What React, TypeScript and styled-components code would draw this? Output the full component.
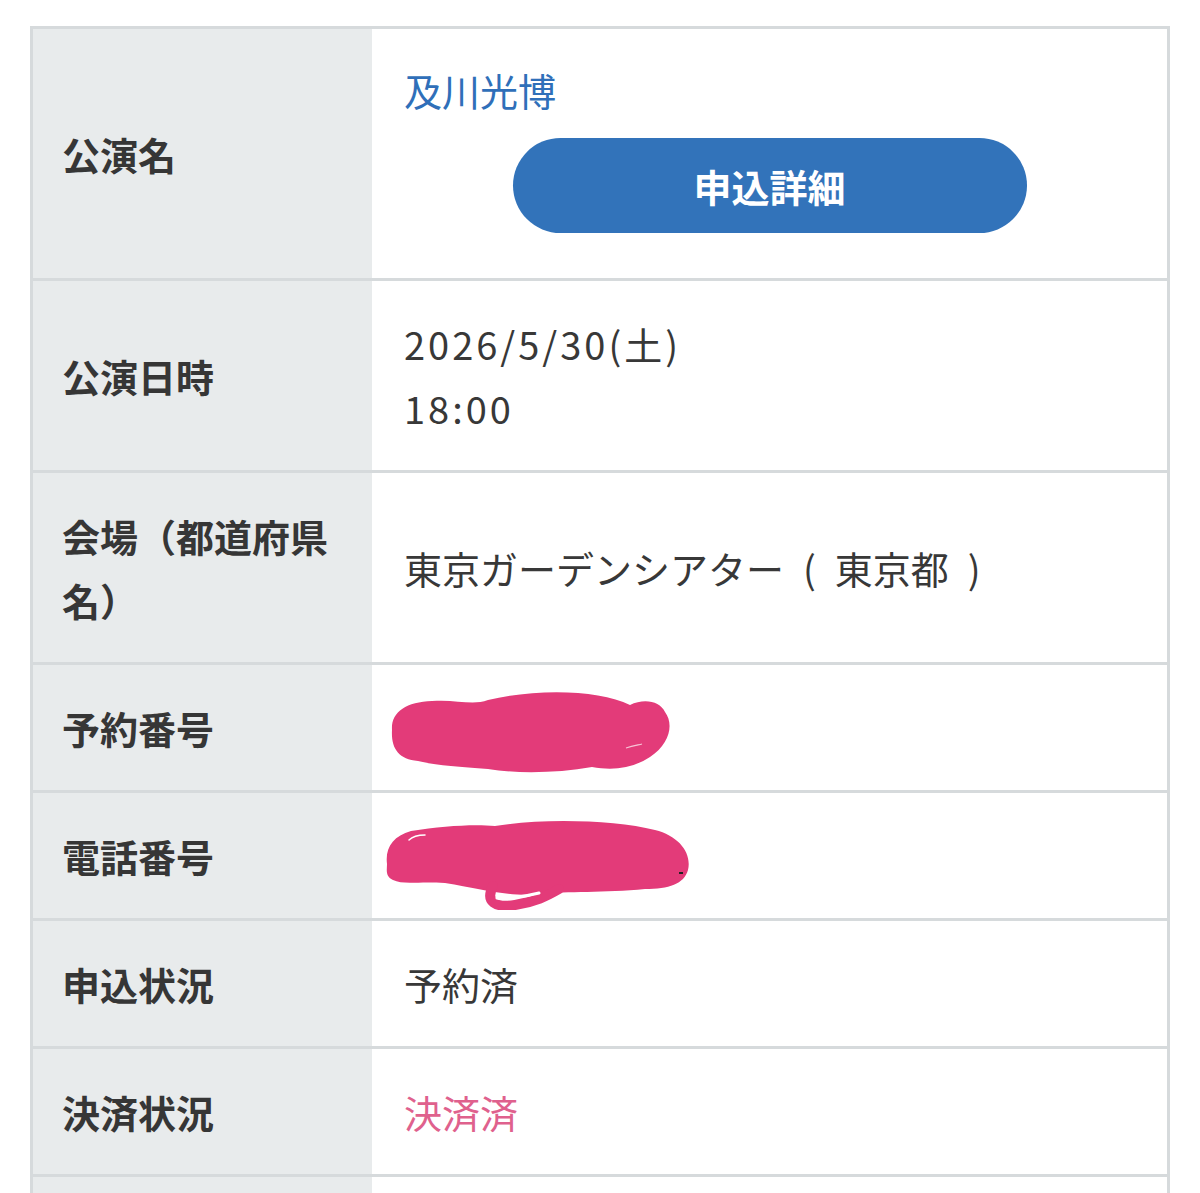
import React from "react";
import styled, { createGlobalStyle } from "styled-components";

const GlobalStyle = createGlobalStyle`
  html, body {
    margin: 0;
    padding: 0;
    background: #ffffff;
  }
  body {
    font-family: "Noto Sans CJK JP", "Noto Sans", sans-serif;
    color: #333333;
    -webkit-font-smoothing: antialiased;
  }
`;

const Page = styled.div`
  padding: 26px 30px 0 30px;
`;

const Table = styled.div`
  width: 1140px;
  box-sizing: border-box;
  border: 3px solid #d6dadc;
  border-bottom: none;
  background: #ffffff;
`;

const Row = styled.div<{ $first?: boolean }>`
  display: grid;
  grid-template-columns: 339px 1fr;
  border-top: ${(p) => (p.$first ? "none" : "3px solid #d6dadc")};
`;

const Label = styled.div`
  background: #e8ebec;
  padding: 30.5px 38px 30.5px 29px;
  display: flex;
  align-items: center;
  font-size: 38px;
  line-height: 64px;
  font-weight: 700;
  color: #363636;
  letter-spacing: 0;
`;

const Value = styled.div`
  padding: 30.5px 32px;
  display: flex;
  flex-direction: column;
  justify-content: center;
  align-items: flex-start;
  font-size: 38px;
  line-height: 64px;
  font-weight: 400;
  color: #383838;
  min-height: 64px;
`;

const TitleValue = styled(Value)`
  padding: 29px 32px 45px 32px;
  justify-content: flex-start;
`;

const NameLink = styled.a`
  color: #2f6fb9;
  text-decoration: none;
  font-size: 38px;
  line-height: 64px;
`;

const DetailButton = styled.button`
  align-self: center;
  margin-top: 16px;
  width: 514px;
  height: 95px;
  border: none;
  border-radius: 48px;
  background: #3273ba;
  color: #ffffff;
  font-family: "Noto Sans CJK JP", "Noto Sans", sans-serif;
  font-size: 38px;
  font-weight: 700;
  line-height: 1;
  cursor: pointer;
`;

const NumericLine = styled.span`
  letter-spacing: 3px;
`;

const StatusText = styled.span<{ $tone?: "pink" | "plain" }>`
  color: ${(p) => (p.$tone === "pink" ? "#df618d" : "#383838")};
`;

const Redaction = styled.svg<{ $top: number; $bottom: number; $left: number }>`
  display: block;
  margin: ${(p) => `${p.$top}px 0 ${p.$bottom}px ${p.$left}px`};
`;

const PINK = "#e33b79";

function ReservationScribble() {
  return (
    <Redaction width="284" height="86" viewBox="0 0 284 86" $top={-7.5} $bottom={-14.5} $left={-16}>
      <path
        fill={PINK}
        d="M4 42 C3 24 18 14 44 13 C68 11 84 18 100 12 C150 0 212 2 242 17 C256 10 272 13 277 24 C286 36 282 56 262 69 C245 80 226 83 204 79 C170 85 130 86 100 81 C70 79 46 77 30 73 C10 71 3 60 4 42 Z"
      />
      <path
        d="M238 60 C245 58 250 57 254 56"
        stroke="#f6c4d6"
        strokeWidth="1.2"
        fill="none"
      />
    </Redaction>
  );
}

function PhoneScribble() {
  return (
    <Redaction width="312" height="92" viewBox="0 0 312 92" $top={-5.5} $bottom={-22.5} $left={-21}>
      <path
        fill={PINK}
        d="M4 46 C2 30 10 18 28 13 C60 8 90 6 112 8 C160 0 232 2 272 12 C296 18 309 35 305 52 C301 66 286 71 262 71 C222 75 182 73 160 76 C122 79 100 71 62 65 C36 63 20 67 10 62 C2 58 4 52 4 46 Z"
      />
      <path
        d="M110 68 C102 84 112 90 132 87 C152 84 164 78 176 71"
        stroke={PINK}
        strokeWidth="10"
        strokeLinecap="round"
        fill="none"
      />
      <path
        d="M114 80 C122 81 140 79 156 75"
        stroke="#ffffff"
        strokeWidth="3"
        strokeLinecap="round"
        fill="none"
      />
      <path
        d="M26 22 C30 18 36 17 42 17"
        stroke="#ffffff"
        strokeWidth="1.5"
        strokeLinecap="round"
        fill="none"
      />
      <rect x="296" y="54" width="4" height="2" fill="#222222" />
    </Redaction>
  );
}

export default function App() {
  return (
    <>
      <GlobalStyle />
      <Page>
        <Table>
          <Row $first>
            <Label>公演名</Label>
            <TitleValue>
              <NameLink href="#">及川光博</NameLink>
              <DetailButton type="button">申込詳細</DetailButton>
            </TitleValue>
          </Row>
          <Row>
            <Label>公演日時</Label>
            <Value>
              <NumericLine>2026/5/30(土)</NumericLine>
              <NumericLine>18:00</NumericLine>
            </Value>
          </Row>
          <Row>
            <Label>会場（都道府県名）</Label>
            <Value>
              <span>{"東京ガーデンシアター\u2002(\u2002東京都\u2002)"}</span>
            </Value>
          </Row>
          <Row>
            <Label>予約番号</Label>
            <Value>
              <ReservationScribble />
            </Value>
          </Row>
          <Row>
            <Label>電話番号</Label>
            <Value>
              <PhoneScribble />
            </Value>
          </Row>
          <Row>
            <Label>申込状況</Label>
            <Value>
              <StatusText $tone="plain">予約済</StatusText>
            </Value>
          </Row>
          <Row>
            <Label>決済状況</Label>
            <Value>
              <StatusText $tone="pink">決済済</StatusText>
            </Value>
          </Row>
          <Row>
            <Label>&nbsp;</Label>
            <Value>&nbsp;</Value>
          </Row>
        </Table>
      </Page>
    </>
  );
}
